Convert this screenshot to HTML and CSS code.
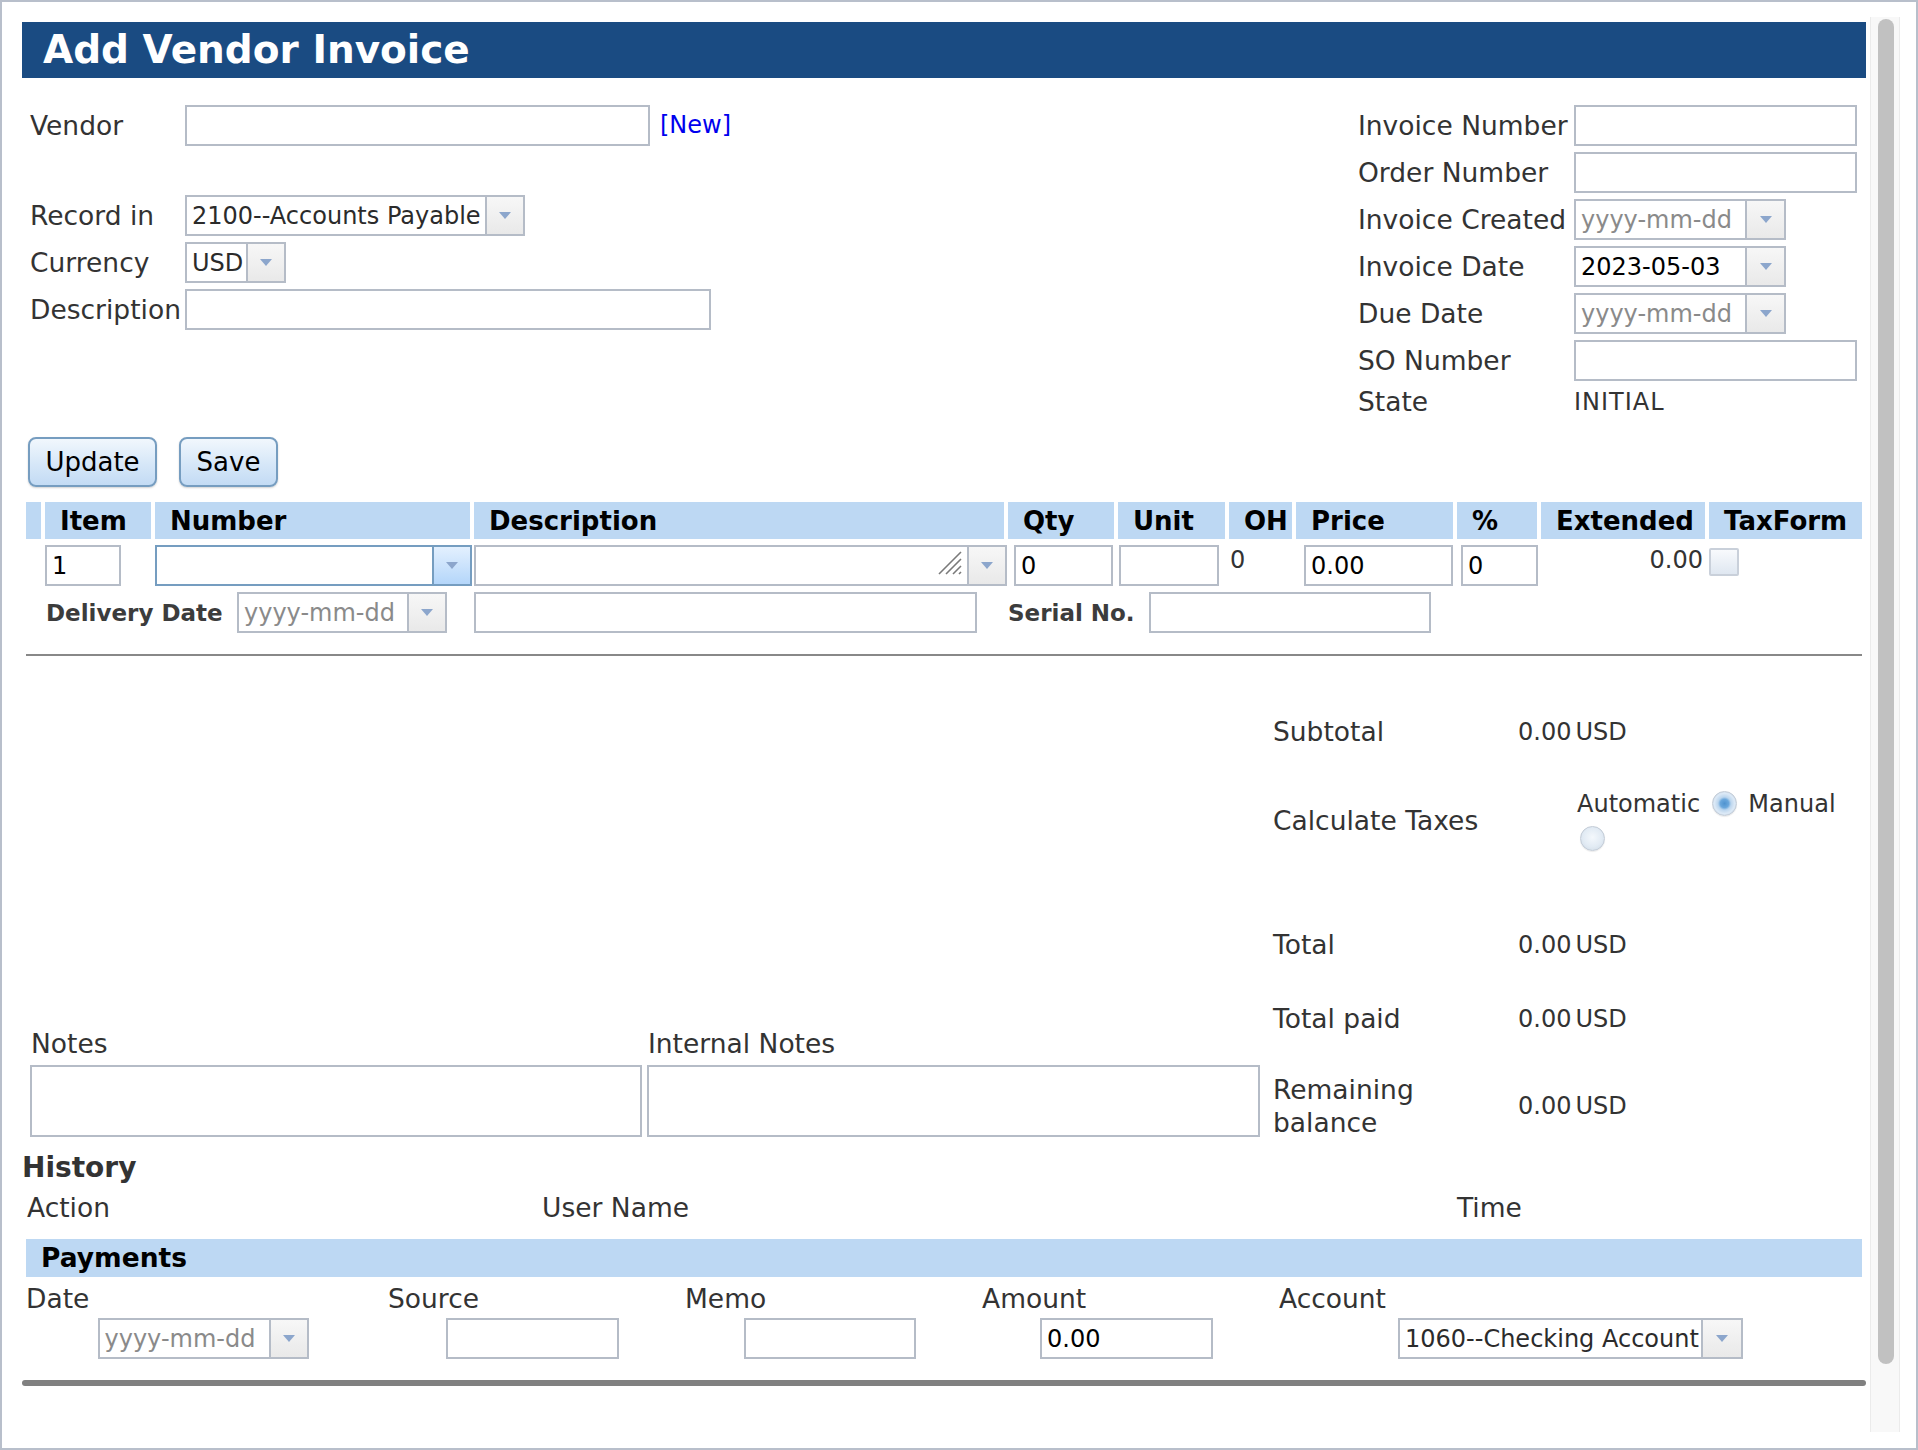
FILE: index.html
```html
<!DOCTYPE html>
<html lang="en">
<head>
<meta charset="utf-8">
<title>Add Vendor Invoice</title>
<link rel="stylesheet" href="styles.css">
</head>
<body>
<div class="frame">
  <div class="content">
    <h1 class="title">Add Vendor Invoice</h1>

    <div class="top">
      <div class="left-fields">
        <div class="lbl">Vendor</div>
        <div class="fieldline"><div class="box w-vendor"></div><a class="newlink" href="#">[New]</a></div>
        <div class="empty"></div><div class="empty"></div>
        <div class="lbl">Record in</div>
        <div class="box combo w-record"><span class="val dark">2100--Accounts Payable</span><span class="arrow"></span></div>
        <div class="lbl">Currency</div>
        <div class="box combo w-cur"><span class="val dark">USD</span><span class="arrow"></span></div>
        <div class="lbl">Description</div>
        <div class="box w-ldesc"></div>
      </div>

      <div class="right-fields">
        <div class="lbl">Invoice Number</div><div class="box w-rtext"></div>
        <div class="lbl">Order Number</div><div class="box w-rtext"></div>
        <div class="lbl">Invoice Created</div>
        <div class="box combo w-rdate"><span class="val ph">yyyy-mm-dd</span><span class="arrow"></span></div>
        <div class="lbl">Invoice Date</div>
        <div class="box combo w-rdate"><span class="val">2023-05-03</span><span class="arrow"></span></div>
        <div class="lbl">Due Date</div>
        <div class="box combo w-rdate"><span class="val ph">yyyy-mm-dd</span><span class="arrow"></span></div>
        <div class="lbl">SO Number</div><div class="box w-rtext"></div>
        <div class="lbl">State</div><div class="static">INITIAL</div>
      </div>
    </div>

    <div class="buttons">
      <button class="btn w-update">Update</button>
      <button class="btn w-save">Save</button>
    </div>

    <table class="items">
      <colgroup>
        <col class="c0"><col class="c1"><col class="c2"><col class="c3"><col class="c4"><col class="c5">
        <col class="c6"><col class="c7"><col class="c8"><col class="c9"><col class="c10">
      </colgroup>
      <thead>
        <tr>
          <th></th><th>Item</th><th>Number</th><th>Description</th><th>Qty</th><th>Unit</th>
          <th>OH</th><th>Price</th><th>%</th><th>Extended</th><th>TaxForm</th>
        </tr>
      </thead>
      <tbody>
        <tr>
          <td></td>
          <td><div class="box w-item">1</div></td>
          <td><div class="box combo focus w-num"><span class="val"></span><span class="arrow"></span></div></td>
          <td><div class="box combo w-desc"><span class="val"></span><svg class="grip" width="24" height="25" viewBox="0 0 24 25"><path d="M1 24 L23 2 M8 24 L23 9 M15 24 L23 16 M21 24 L23 22" stroke="#7a7a7a" stroke-width="1.6" fill="none"/></svg><span class="arrow"></span></div></td>
          <td><div class="box w-qty">0</div></td>
          <td><div class="box w-unit"></div></td>
          <td class="txt oh">0</td>
          <td><div class="box w-price">0.00</div></td>
          <td><div class="box w-pct">0</div></td>
          <td class="txt ext">0.00</td>
          <td><span class="check"></span></td>
        </tr>
        <tr>
          <td></td>
          <td colspan="2"><div class="inline"><span class="blbl w-dd">Delivery Date</span><div class="box combo w-ddate"><span class="val ph">yyyy-mm-dd</span><span class="arrow"></span></div></div></td>
          <td><div class="box w-d2"></div></td>
          <td colspan="7"><div class="inline"><span class="blbl w-sn">Serial No.</span><div class="box w-serial"></div></div></td>
        </tr>
      </tbody>
    </table>

    <div class="sep"></div>

    <div class="summary">
      <div class="notes">
        <div class="nlbl">Notes</div>
        <div class="nlbl">Internal Notes</div>
        <div class="tarea"></div>
        <div class="tarea"></div>
      </div>
      <div class="totals">
        <div class="trow"><div class="tl">Subtotal</div><div class="tv"><span>0.00</span><span class="cur">USD</span></div></div>
        <div class="trow taxes">
          <div class="tl">Calculate Taxes</div>
          <div class="opts">
            <div class="optline">Automatic <span class="radio checked"></span> Manual</div>
            <div class="optline"><span class="radio"></span></div>
          </div>
        </div>
        <div class="tspacer"></div>
        <div class="trow"><div class="tl">Total</div><div class="tv"><span>0.00</span><span class="cur">USD</span></div></div>
        <div class="trow"><div class="tl">Total paid</div><div class="tv"><span>0.00</span><span class="cur">USD</span></div></div>
        <div class="trow tall"><div class="tl two">Remaining<br>balance</div><div class="tv"><span>0.00</span><span class="cur">USD</span></div></div>
      </div>
    </div>

    <h3 class="history">History</h3>
    <div class="hcols"><div>Action</div><div>User Name</div><div>Time</div></div>

    <div class="paybar">Payments</div>
    <div class="paygrid">
      <div class="plbl">Date</div><div class="plbl">Source</div><div class="plbl">Memo</div><div class="plbl">Amount</div><div class="plbl">Account</div>
      <div class="box combo w-pdate"><span class="val ph">yyyy-mm-dd</span><span class="arrow"></span></div>
      <div class="box w-src"></div>
      <div class="box w-memo"></div>
      <div class="box w-amt">0.00</div>
      <div class="box combo w-acct"><span class="val dark">1060--Checking Account</span><span class="arrow"></span></div>
    </div>

    <div class="endrule"></div>
  </div>
  <div class="scrollbar"><div class="thumb"></div></div>
</div>
</body>
</html>
```

FILE: styles.css
```css
* { box-sizing: border-box; }
html, body { margin: 0; padding: 0; }
body {
  font-family: "DejaVu Sans", Verdana, sans-serif;
  color: #333;
  background: #fff;
  width: 1918px;
  height: 1450px;
  overflow: hidden;
}
.frame {
  width: 1918px;
  height: 1450px;
  border: 2px solid #b8bfcb;
  padding: 15px 16px 16px 0;
  display: flex;
}
.content {
  flex: 1;
  min-width: 0;
  padding: 5px 4px 0 20px;
  overflow: hidden;
}
.scrollbar {
  width: 30px;
  background: #f8f8f8;
  border-left: 1px solid #ebebeb;
  border-right: 1px solid #ebebeb;
  padding: 2px 5px 0 7px;
}
.thumb {
  height: 1345px;
  background: #c1c1c1;
  border-radius: 8px;
}

/* title */
.title {
  margin: 0;
  height: 56px;
  background: #1a4b82;
  color: #fff;
  font-size: 39px;
  font-weight: bold;
  line-height: 56px;
  padding-left: 21px;
}

/* generic */
.lbl {
  font-size: 26.5px;
  line-height: 32px;
  color: #333;
  white-space: nowrap;
}
.box {
  display: flex;
  align-items: center;
  height: 41px;
  border: 2px solid #b5bcc7;
  background: #fff;
  font-size: 24px;
  color: #000;
  padding-left: 5px;
  white-space: nowrap;
}
.combo { padding-left: 0; }
.combo .val {
  flex: 1;
  padding-left: 5px;
  white-space: nowrap;
  overflow: visible;
}
.val.ph { color: #8a8a8a; }
.val.dark { color: #2b2b2b; }
.combo .arrow {
  width: 38px;
  flex: none;
  align-self: stretch;
  border-left: 2px solid #b5bcc7;
  background: linear-gradient(#f7f7f7, #e9e9e9);
  display: flex;
  align-items: center;
  justify-content: center;
}
.combo .arrow::after {
  content: "";
  border-left: 6px solid transparent;
  border-right: 6px solid transparent;
  border-top: 7px solid #8ca6cc;
}
.combo.focus { border-color: #759dc0; }
.combo.focus .arrow {
  border-left-color: #759dc0;
  background: linear-gradient(#e3f0fe, #b4d6fa);
}
.grip {
  align-self: flex-start;
  margin-top: 3px;
  margin-right: 5px;
  flex: none;
}

/* top section */
.top {
  display: flex;
  justify-content: space-between;
  margin-top: 27px;
}
.left-fields {
  display: grid;
  grid-template-columns: 155px auto;
  grid-template-rows: 41px 37px 41px 41px 41px;
  row-gap: 6px;
  padding-left: 8px;
  align-items: center;
  align-content: start;
  justify-items: start;
}
.fieldline { display: flex; align-items: center; }
.newlink {
  margin-left: 10px;
  margin-bottom: 2px;
  font-size: 24px;
  color: #0000ee;
  text-decoration: none;
}
.w-vendor { width: 465px; }
.w-record { width: 340px; }
.w-cur { width: 101px; }
.w-ldesc { width: 526px; }

.right-fields {
  display: grid;
  grid-template-columns: 216px 283px;
  grid-template-rows: repeat(6, 41px) 30px;
  row-gap: 6px;
  margin-right: 9px;
  align-items: center;
  justify-items: start;
}
.w-rtext { width: 283px; }
.w-rdate { width: 212px; }
.w-rdate .arrow { width: 39px; }
.static { font-size: 24px; color: #333; line-height: 30px; letter-spacing: 1px; }

/* buttons */
.buttons {
  display: flex;
  gap: 22px;
  margin-top: 20px;
  padding-left: 6px;
}
.btn {
  height: 50px;
  border: 2px solid #769dc0;
  border-radius: 8px;
  background: linear-gradient(#f1f7fd, #d6e7f8 55%, #c3dbf4);
  font-family: "DejaVu Sans", Verdana, sans-serif;
  font-size: 26px;
  color: #000;
  padding: 0;
  box-shadow: 0 1px 2px rgba(0, 0, 0, 0.18);
}
.w-update { width: 129px; }
.w-save { width: 99px; }

/* items table */
.items {
  border-collapse: separate;
  border-spacing: 4px 0;
  table-layout: fixed;
  width: 1844px;
  margin-top: 15px;
}
.c0 { width: 15px; }
.c1 { width: 106px; }
.c2 { width: 315px; }
.c3 { width: 530px; }
.c4 { width: 106px; }
.c5 { width: 107px; }
.c6 { width: 63px; }
.c7 { width: 157px; }
.c8 { width: 80px; }
.c9 { width: 164px; }
.c10 { width: 153px; }
.items th {
  background: #bdd8f3;
  height: 37px;
  padding: 0 0 0 15px;
  text-align: left;
  font-size: 26px;
  font-weight: bold;
  color: #000;
  white-space: nowrap;
  overflow: visible;
}
.items td {
  padding: 6px 0 0;
  vertical-align: top;
}
.items .txt {
  font-size: 24px;
  line-height: 30px;
  color: #333;
}
.items .oh { padding-left: 1px; }
.items .ext { text-align: right; padding-right: 2px; }
.w-item { width: 76px; }
.w-num { width: 317px; }
.w-desc { width: 533px; }
.w-qty { width: 99px; margin-left: 6px; }
.w-unit { width: 100px; margin-left: 1px; }
.w-price { width: 149px; margin-left: 8px; }
.w-pct { width: 77px; margin-left: 4px; }
.check {
  display: block;
  width: 30px;
  height: 28px;
  margin-top: 3px;
  border: 2px solid #c9d0da;
  border-radius: 2px;
  background: linear-gradient(#f8fafd, #dfe7f1);
}
.inline { display: flex; align-items: center; }
.blbl {
  font-size: 23px;
  font-weight: bold;
  color: #3c3c3c;
  white-space: nowrap;
  flex: none;
}
.w-dd { width: 192px; padding-left: 1px; }
.w-ddate { width: 210px; }
.w-d2 { width: 503px; }
.w-sn { width: 141px; }
.w-serial { width: 282px; }

.sep {
  height: 2px;
  background: #888;
  margin: 21px 4px 0;
}

/* summary */
.summary {
  display: flex;
  align-items: flex-end;
}
.notes {
  width: 1251px;
  flex: none;
  padding-left: 8px;
  display: grid;
  grid-template-columns: 612px 613px;
  column-gap: 5px;
  margin-bottom: 2px;
}
.nlbl {
  font-size: 26.5px;
  line-height: 30px;
  padding-left: 1px;
  margin-bottom: 6px;
  color: #333;
}
.tarea {
  height: 72px;
  border: 2px solid #b5bcc7;
  background: #fff;
}
.totals {
  padding-top: 56px;
  display: flex;
  flex-direction: column;
  gap: 34px;
}
.trow {
  display: grid;
  grid-template-columns: 245px auto;
  align-items: center;
  height: 40px;
}
.trow.taxes { height: 70px; }
.trow.tall { height: 66px; }
.tspacer { height: 1px; }
.tl {
  font-size: 26.5px;
  line-height: 32px;
  color: #333;
  white-space: nowrap;
}
.tl.two { line-height: 33px; }
.tv {
  font-size: 24px;
  color: #333;
  white-space: nowrap;
}
.tv .cur { margin-left: 4px; }
.opts {
  padding-left: 59px;
  font-size: 24px;
  color: #333;
}
.optline {
  height: 35px;
  display: flex;
  align-items: center;
  white-space: pre;
}
.radio {
  display: inline-block;
  width: 25px;
  height: 25px;
  border-radius: 50%;
  border: 1px solid #c2cbd6;
  background: radial-gradient(circle at 50% 45%, #f4f8fc 0, #e2ebf4 55%, #ccd7e3 100%);
  box-shadow: 0 1px 1px rgba(0, 0, 0, 0.08);
  margin: 0 4px;
}
.optline:last-child .radio { margin-left: 3px; }
.radio.checked {
  background: radial-gradient(circle, #4f93cf 0, #6aa7dc 26%, #bcd6ee 40%, #dce9f6 62%, #b9c8d9 100%);
}

/* history */
.history {
  margin: 12px 0 0;
  font-size: 28px;
  line-height: 34px;
  font-weight: bold;
  color: #333;
}
.hcols {
  display: grid;
  grid-template-columns: 515px 915px auto;
  padding-left: 5px;
  margin-top: 7px;
  font-size: 26.5px;
  line-height: 32px;
  color: #333;
}

/* payments */
.paybar {
  margin: 15px 4px 0;
  height: 38px;
  background: #bdd8f3;
  padding-left: 15px;
  font-size: 26.5px;
  line-height: 38px;
  font-weight: bold;
  color: #000;
}
.paygrid {
  display: grid;
  grid-template-columns: 362px 297px 297px 297px 591px;
  grid-template-rows: 32px 41px;
  row-gap: 3px;
  margin-top: 6px;
}
.plbl {
  font-size: 26.5px;
  line-height: 32px;
  padding-left: 4px;
  color: #333;
}
.paygrid .box { justify-self: center; }
.w-pdate { width: 211px; }
.w-src { width: 173px; }
.w-memo { width: 172px; }
.w-amt { width: 173px; }
.w-acct { width: 345px; }
.w-acct .arrow { width: 40px; }

.endrule {
  margin-top: 21px;
  height: 6px;
  background: #808080;
  border-radius: 3px;
}
```
